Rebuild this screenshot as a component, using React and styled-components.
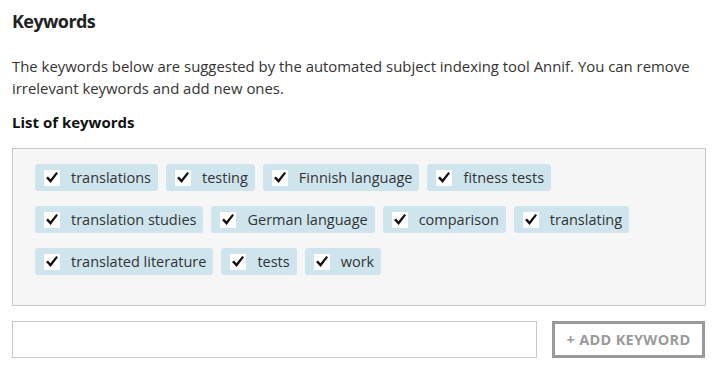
import React, { useState } from 'react';
import styled, { createGlobalStyle } from 'styled-components';

const GlobalStyle = createGlobalStyle`
  html, body {
    margin: 0;
    padding: 0;
    background: #fff;
  }
  body {
    font-family: 'Open Sans', 'Noto Sans', sans-serif;
    color: #222;
  }
`;

const Page = styled.div`
  padding: 8px 12px 0 12px;
  width: 694px;
`;

const Title = styled.h2`
  margin: 0;
  font-size: 18px;
  font-weight: 700;
  letter-spacing: -0.6px;
  line-height: 26px;
  color: #222;
`;

const Intro = styled.p`
  margin: 21px 0 0 0;
  font-size: 14.9px;
  line-height: 22px;
  color: #333;
`;

const ListTitle = styled.h3`
  margin: 12px 0 0 0;
  font-size: 15px;
  font-weight: 700;
  line-height: 22px;
  color: #111;
`;

const KeywordBox = styled.div`
  margin-top: 15px;
  background: #f6f6f6;
  border: 1px solid #c8c8c8;
  padding: 15px 22px;
  height: 158px;
  box-sizing: border-box;
  display: flex;
  flex-direction: column;
  gap: 15px;
`;

const ChipRow = styled.div`
  display: flex;
  gap: 8px;
`;

const Chip = styled.label`
  display: flex;
  align-items: center;
  height: 27px;
  padding: 0 7px 0 9px;
  background: #cfe5ee;
  border-radius: 3px;
  font-size: 14.5px;
  color: #333;
  cursor: pointer;
`;

const Box = styled.span`
  width: 16px;
  height: 16px;
  background: #fff;
  display: flex;
  align-items: center;
  justify-content: center;
  margin-right: 11px;
`;

const AddRow = styled.div`
  display: flex;
  align-items: center;
  gap: 15px;
  margin-top: 15px;
`;

const TextInput = styled.input`
  width: 525px;
  height: 37px;
  box-sizing: border-box;
  border: 1px solid #c8c8c8;
  background: #fff;
  font-family: inherit;
  font-size: 15px;
  padding: 0 10px;
  outline: none;
`;

const AddButton = styled.button`
  width: 153px;
  height: 37px;
  box-sizing: border-box;
  border: 3px solid #9a9a9a;
  background: #fff;
  color: #9a9a9a;
  font-family: 'Open Sans', sans-serif;
  font-weight: 700;
  font-size: 14.5px;
  letter-spacing: 0.3px;
  cursor: pointer;
`;

const Check = () => (
  <svg width="12" height="11" viewBox="0 0 12 11">
    <path d="M0 6 L2 4.6 L4.4 7.2 L10.3 0 L12 1.3 L4.6 11 Z" fill="#111" />
  </svg>
);

const rows = [
  ['translations', 'testing', 'Finnish language', 'fitness tests'],
  ['translation studies', 'German language', 'comparison', 'translating'],
  ['translated literature', 'tests', 'work'],
];

export default function App() {
  const [value, setValue] = useState('');
  return (
    <Page>
      <GlobalStyle />
      <Title>Keywords</Title>
      <Intro>
        The keywords below are suggested by the automated subject indexing tool Annif. You can remove
        irrelevant keywords and add new ones.
      </Intro>
      <ListTitle>List of keywords</ListTitle>
      <KeywordBox>
        {rows.map((row, i) => (
          <ChipRow key={i}>
            {row.map(k => (
              <Chip key={k}>
                <Box>
                  <Check />
                </Box>
                {k}
              </Chip>
            ))}
          </ChipRow>
        ))}
      </KeywordBox>
      <AddRow>
        <TextInput value={value} onChange={e => setValue(e.target.value)} />
        <AddButton>+ ADD KEYWORD</AddButton>
      </AddRow>
    </Page>
  );
}
